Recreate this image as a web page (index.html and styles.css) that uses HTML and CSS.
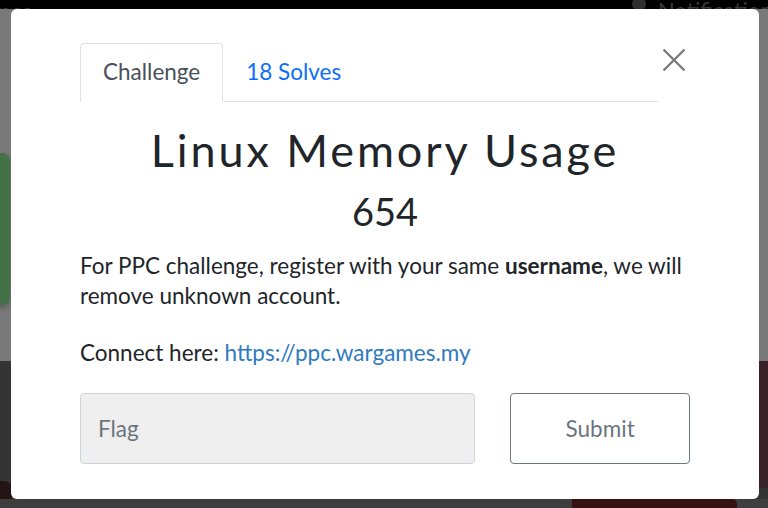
FILE: index.html
```html
<!DOCTYPE html>
<html lang="en">
<head>
<meta charset="utf-8">
<title>Linux Memory Usage</title>
<link rel="stylesheet" href="styles.css">
</head>
<body>
<div class="page">
  <div class="topbar">
    <span class="brand">Wargames</span>
    <span class="notif"><span class="dot"></span>Notifications</span>
  </div>
  <div class="hero">
    <div class="card-green"></div>
  </div>
  <div class="lower">
    <div class="lower-main">
      <div class="shape-left"></div>
      <div class="shape-right"></div>
    </div>
    <div class="footer-strip">
      <div class="shape-bottom"></div>
    </div>
  </div>
</div>

<div class="modal">
  <div class="modal-head">
    <nav class="tabs">
      <a class="tab active">Challenge</a>
      <a class="tab">18 Solves</a>
    </nav>
    <button class="close" aria-label="Close">
      <svg width="24" height="24" viewBox="0 0 24 24"><path d="M1.5 1.5 L22.5 22.5 M22.5 1.5 L1.5 22.5" stroke="#7b7b7b" stroke-width="2.4" fill="none"/></svg>
    </button>
  </div>
  <h2 class="title">Linux Memory Usage</h2>
  <h3 class="value">654</h3>
  <p class="desc">For PPC challenge, register with your same <b>username</b>, we will remove unknown account.</p>
  <p class="desc">Connect here: <a class="link">https://ppc.wargames.my</a></p>
  <form class="submit-row">
    <input class="flag" type="text" placeholder="Flag">
    <button class="btn" type="button">Submit</button>
  </form>
</div>
</body>
</html>
```

FILE: styles.css
```css
* { box-sizing: border-box; }
html, body { margin: 0; padding: 0; }
body {
  width: 768px;
  height: 508px;
  overflow: hidden;
  position: relative;
  font-family: Lato, "Noto Sans", sans-serif;
  background: #353535;
}
.page {
  display: flex;
  flex-direction: column;
  height: 508px;
}
.topbar {
  height: 9px;
  background: #000;
  overflow: hidden;
  display: flex;
  justify-content: space-between;
  align-items: flex-start;
  color: #3a3a3a;
  font-size: 22px;
  line-height: 1;
}
.brand { margin-left: -70px; }
.notif { display: flex; align-items: flex-start; gap: 12px; margin-right: -14px; margin-top: -1px; }
.dot { width: 14px; height: 14px; border-radius: 50%; background: #2f2f2f; margin-top: -2px; }
.hero {
  height: 352px;
  background: #797979;
  padding-top: 144px;
}
.card-green {
  width: 60px;
  height: 152px;
  margin-left: -50px;
  background: #437148;
  border-radius: 8px;
  box-shadow: 0 3px 6px rgba(0,0,0,0.25);
}
.lower {
  flex: 1;
  display: flex;
  flex-direction: column;
}
.lower-main {
  flex: 1;
  background: #343434;
  display: flex;
  justify-content: space-between;
  align-items: flex-end;
}
.shape-left {
  width: 12px;
  height: 18px;
  background: #221514;
  border-radius: 0 8px 0 0;
}
.shape-right {
  align-self: flex-start;
  width: 10px;
  height: 127px;
  background: #3a2228;
}
.footer-strip {
  height: 9px;
  background: #3e3e3e;
  display: flex;
  padding-left: 572px;
}
.shape-bottom {
  width: 165px;
  height: 9px;
  background: #361112;
  border-radius: 0 5px 0 0;
}

/* modal */
.modal {
  position: absolute;
  left: 11px;
  top: 9px;
  width: 748px;
  height: 490px;
  background: #fff;
  border-radius: 6px;
  padding: 34px 69px 0;
  color: #212529;
}
.modal-head {
  display: flex;
  align-items: flex-start;
}
.tabs {
  flex: 1;
  display: flex;
  border-bottom: 1px solid #dee2e6;
}
.tab {
  font-size: 22.5px;
  line-height: 30px;
  padding: 13px 22px 14px;
  margin-bottom: -1px;
  border: 1px solid transparent;
  border-radius: 4px 4px 0 0;
  color: #0d6efd;
}
.tab.active {
  color: #495057;
  border-color: #dee2e6 #dee2e6 #fff;
  background: #fff;
}
.close {
  width: 32px;
  height: 40px;
  padding: 0;
  border: 0;
  background: none;
  display: flex;
  align-items: center;
  justify-content: center;
  margin-top: -3px;
}
.title {
  margin: 20px 0 0;
  text-align: center;
  font-weight: 400;
  font-size: 45px;
  line-height: 56px;
  letter-spacing: 2.9px;
}
.value {
  margin: 9px 0 0;
  text-align: center;
  font-weight: 400;
  font-size: 38px;
  line-height: 48px;
}
.desc {
  margin: 16px 0 0;
  font-size: 22.5px;
  line-height: 30px;
}
.desc + .desc { margin-top: 27px; }
.desc b { font-weight: 700; }
.link { color: #2e7bbf; }
.submit-row {
  margin-top: 25px;
  display: flex;
  gap: 35px;
}
.flag {
  width: 396px;
  height: 71px;
  background: #efefef;
  border: 1px solid #ced4da;
  border-radius: 4px;
  padding: 0 17px;
  font-family: Lato, sans-serif;
  font-size: 22.5px;
  color: #495057;
}
.flag::placeholder { color: #6c757d; }
.btn {
  width: 180px;
  height: 71px;
  background: #fff;
  border: 1px solid #6c757d;
  border-radius: 4px;
  color: #6c757d;
  font-family: Lato, sans-serif;
  font-size: 22.5px;
}
```
